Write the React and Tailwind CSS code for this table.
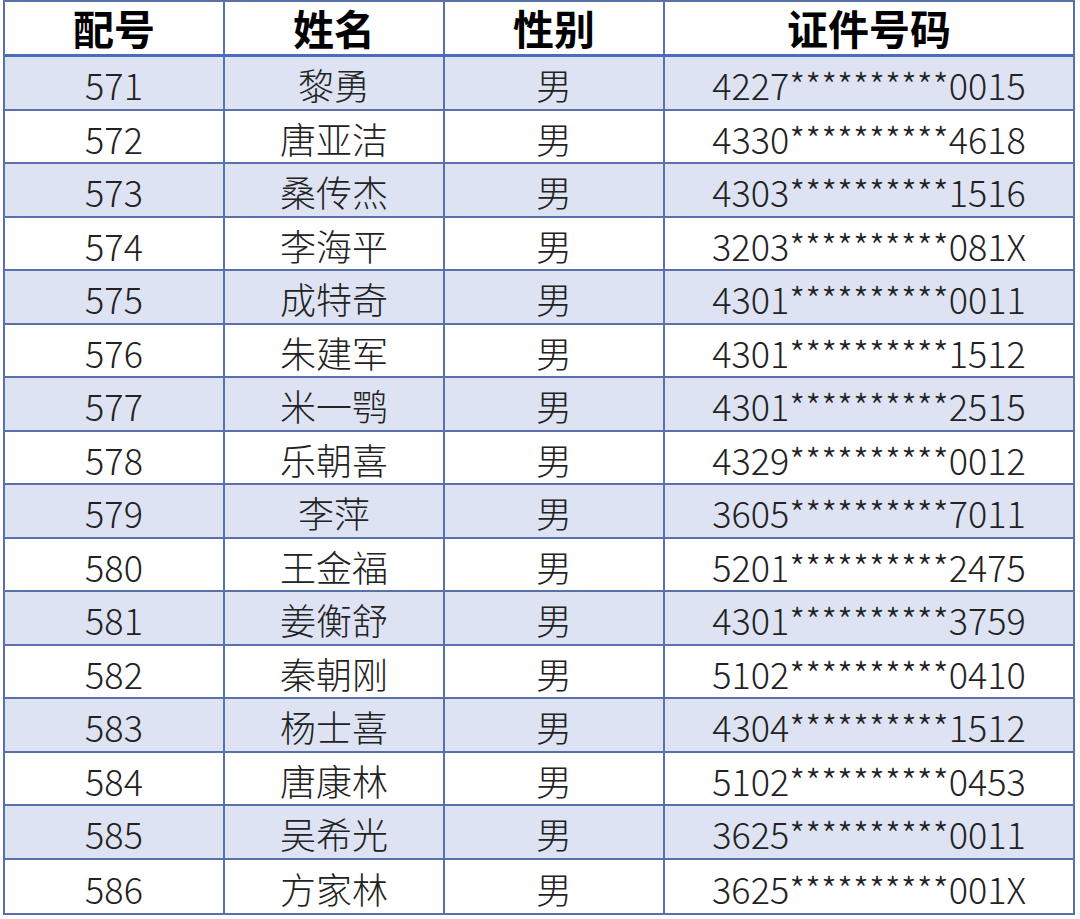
const ROWS = [
  ['571', '黎勇', '男', '4227**********0015'],
  ['572', '唐亚洁', '男', '4330**********4618'],
  ['573', '桑传杰', '男', '4303**********1516'],
  ['574', '李海平', '男', '3203**********081X'],
  ['575', '成特奇', '男', '4301**********0011'],
  ['576', '朱建军', '男', '4301**********1512'],
  ['577', '米一鹗', '男', '4301**********2515'],
  ['578', '乐朝喜', '男', '4329**********0012'],
  ['579', '李萍', '男', '3605**********7011'],
  ['580', '王金福', '男', '5201**********2475'],
  ['581', '姜衡舒', '男', '4301**********3759'],
  ['582', '秦朝刚', '男', '5102**********0410'],
  ['583', '杨士喜', '男', '4304**********1512'],
  ['584', '唐康林', '男', '5102**********0453'],
  ['585', '吴希光', '男', '3625**********0011'],
  ['586', '方家林', '男', '3625**********001X'],
]

const HEAD = ['配号', '姓名', '性别', '证件号码']

export default function App() {
  return (
    <div className="w-[1080px] h-[919px] bg-white overflow-hidden" style={{ fontFamily: '"Noto Sans CJK SC", "Noto Sans", sans-serif' }}>
      <div className="ml-[3px] w-[1072px] border-2 border-[#5a70aa]">
        {/* header */}
        <div className="flex h-[55px] border-b-[3px] border-[#4a6cbf] bg-white">
          {HEAD.map((h, i) => (
            <div
              key={h}
              className={`flex items-center justify-center text-[41px] font-bold text-black leading-[1.2] ${i < 3 ? 'w-[220px] border-r-2 border-[#5a70aa]' : 'flex-1'}`}
            >
              {h}
            </div>
          ))}
        </div>

        {ROWS.map((r, idx) => (
          <div
            key={r[0]}
            className={`flex h-[53.5px] ${idx < ROWS.length - 1 ? 'border-b-2 border-[#5a70aa]' : ''} ${idx % 2 === 0 ? 'bg-[#dde3f2]' : 'bg-white'}`}
          >
            {r.map((c, i) => (
              <div
                key={i}
                className={`flex items-center justify-center pt-[3px] text-[36px] font-light text-[#222] leading-none ${i < 3 ? 'w-[220px] border-r-2 border-[#5a70aa]' : 'flex-1'}`}
              >
                {c}
              </div>
            ))}
          </div>
        ))}
      </div>
    </div>
  )
}
